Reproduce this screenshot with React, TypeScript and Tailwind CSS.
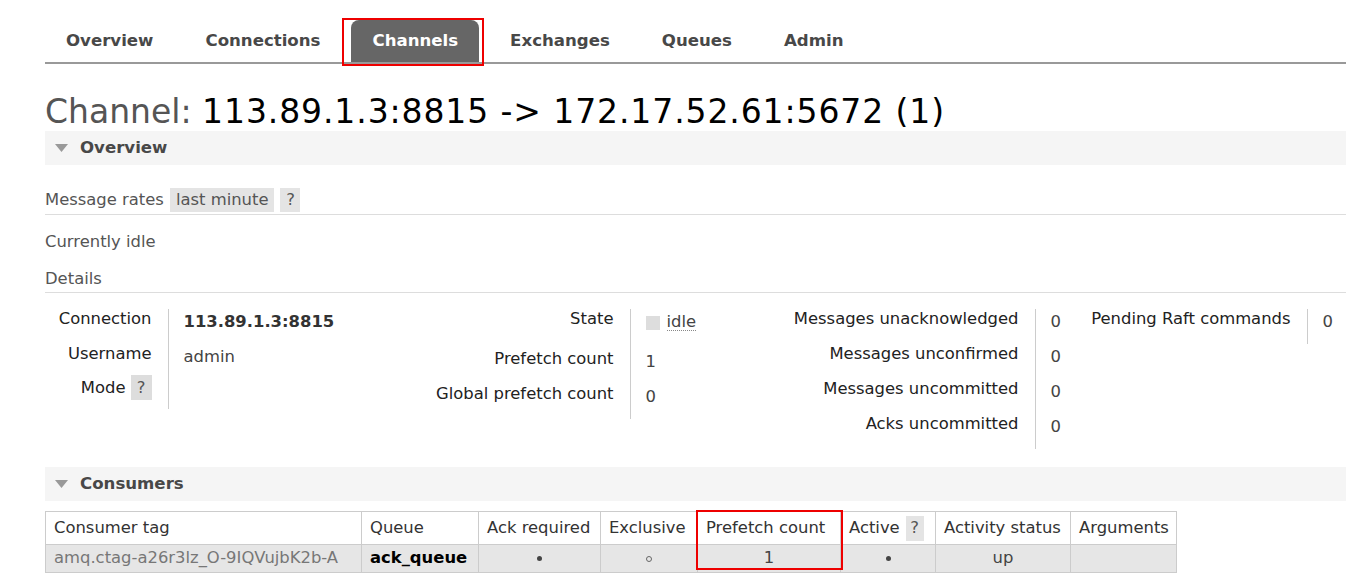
import React from 'react'

const navItems = ['Overview', 'Connections', 'Channels', 'Exchanges', 'Queues', 'Admin']

function Help() {
  return <span className="ml-[5px] inline-flex h-[25px] w-[21px] items-center justify-center bg-[#dddddd] text-[#555]">?</span>
}

function SectionBar({ title }: { title: string }) {
  return (
    <div className="flex h-[34px] items-center bg-[#f5f5f5]">
      <svg className="ml-[10px] h-[8px] w-[13px]" viewBox="0 0 13 8">
        <polygon points="0,0 13,0 6.5,8" fill="#999" />
      </svg>
      <span className="ml-[12px] text-[16.6px] font-bold text-[#484848]">{title}</span>
    </div>
  )
}

type Row = { label: React.ReactNode; value: React.ReactNode; h?: string }

function Facts({ rows, thW, tdW }: { rows: Row[]; thW: string; tdW: string }) {
  return (
    <table className="border-collapse self-start">
      <tbody>
        {rows.map((r, i) => (
          <tr key={i}>
            <th className={`${thW} ${r.h ?? 'h-[35px]'} pr-[16px] pt-[2px] text-right align-top font-normal leading-[16px] text-[#222]`}>
              {r.label}
            </th>
            <td className={`${tdW} border-l border-[#cccccc] pl-[15px] pt-[5px] align-top leading-[16px] text-[#444]`}>
              {r.value}
            </td>
          </tr>
        ))}
      </tbody>
    </table>
  )
}

export default function App() {
  const cols = [
    { name: 'Consumer tag', w: 'w-[316px]' },
    { name: 'Queue', w: 'w-[117px]' },
    { name: 'Ack required', w: 'w-[122px]' },
    { name: 'Exclusive', w: 'w-[97px]' },
    { name: 'Prefetch count', w: 'w-[143px]' },
    { name: 'Active', w: 'w-[95px]' },
    { name: 'Activity status', w: 'w-[135px]' },
    { name: 'Arguments', w: 'w-[106px]' },
  ]

  const dot = <span className="inline-block h-[5px] w-[5px] rounded-full bg-[#444] align-middle" />
  const ring = <span className="inline-block h-[6px] w-[6px] rounded-full border border-[#666] align-middle" />

  return (
    <div className="min-h-[579px] bg-white pl-[45px] font-['DejaVu_Sans','Verdana',sans-serif] text-[16.4px] text-[#555]">
      {/* top navigation */}
      <ul className="flex gap-[10px] border-b-2 border-[#999] pt-[20px] text-[16.6px]">
        {navItems.map((n) =>
          n === 'Channels' ? (
            <li key={n} className="relative flex h-[42px] items-center rounded-t-[8px] bg-[#666] px-[21px] font-bold text-white">
              {n}
              <span className="pointer-events-none absolute -bottom-[4px] -left-[9px] -right-[5px] -top-[2px] border-2 border-[#ee0000]" />
            </li>
          ) : (
            <li key={n} className="flex h-[42px] items-center px-[21px] font-bold text-[#484848]">
              {n}
            </li>
          ),
        )}
      </ul>

      <h1 className="mt-[29px] text-[33px] font-normal leading-[38px] text-[#555]">
        Channel: <span className="tracking-[0.9px] text-black">113.89.1.3:8815 -&gt; 172.17.52.61:5672 (1)</span>
      </h1>

      <SectionBar title="Overview" />

      <div className="mt-[23px] flex items-center border-b border-[#dddddd] pb-[2px]">
        <span className="leading-[24px]">Message rates</span>
        <span className="ml-[6px] h-[24px] bg-[#e4e4e4] px-[6px] leading-[24px]">last minute</span>
        <span className="ml-[6px] h-[24px] w-[20px] bg-[#e4e4e4] text-center leading-[24px]">?</span>
      </div>

      <div className="mt-[15px] leading-[24px]">Currently idle</div>
      <div className="mt-[13px] border-b border-[#dddddd] pb-[1px] leading-[24px]">Details</div>

      <div className="mt-[16px] flex">
        <Facts
          thW="w-[123px]"
          tdW="w-[210px]"
          rows={[
            { label: 'Connection', value: <span className="font-bold text-[#333]">113.89.1.3:8815</span> },
            { label: 'Username', value: 'admin' },
            {
              label: (
                <span className="relative -top-[6px] inline-flex items-center">
                  Mode
                  <Help />
                </span>
              ),
              value: '',
              h: 'h-[30px]',
            },
          ]}
        />
        <Facts
          thW="w-[252px]"
          tdW="w-[130px]"
          rows={[
            {
              label: 'State',
              h: 'h-[40px]',
              value: (
                <span className="inline-flex items-center">
                  <span className="h-[14px] w-[14px] bg-[#dddddd]" />
                  <span className="ml-[7px] border-b border-dotted border-[#888]">idle</span>
                </span>
              ),
            },
            { label: 'Prefetch count', value: '1' },
            { label: 'Global prefetch count', value: '0' },
          ]}
        />
        <Facts
          thW="w-[275px]"
          tdW="w-[40px]"
          rows={[
            { label: 'Messages unacknowledged', value: '0' },
            { label: 'Messages unconfirmed', value: '0' },
            { label: 'Messages uncommitted', value: '0' },
            { label: 'Acks uncommitted', value: '0' },
          ]}
        />
        <Facts thW="w-[232px]" tdW="w-[39px]" rows={[{ label: 'Pending Raft commands', value: '0' }]} />
      </div>

      <div className="mt-[18px]">
        <SectionBar title="Consumers" />
      </div>

      <div className="relative mt-[10px] w-[1131px]">
        <table className="w-[1131px] table-fixed border-collapse">
          <thead>
            <tr>
              {cols.map((c) => (
                <th key={c.name} className={`${c.w} h-[33px] border border-[#cccccc] bg-white px-[8px] text-left font-normal whitespace-nowrap text-[#333]`}>
                  {c.name === 'Active' ? (
                    <span className="inline-flex items-center">
                      Active
                      <span className="ml-[6px] inline-flex h-[25px] w-[18px] items-center justify-center bg-[#e4e4e4] text-[#555]">?</span>
                    </span>
                  ) : (
                    c.name
                  )}
                </th>
              ))}
            </tr>
          </thead>
          <tbody>
            <tr className="bg-[#e6e6e6]">
              <td className="h-[28px] border border-[#cccccc] px-[8px] whitespace-nowrap text-[#777]">amq.ctag-a26r3lz_O-9IQVujbK2b-A</td>
              <td className="border border-[#cccccc] px-[8px] font-bold text-black">ack_queue</td>
              <td className="border border-[#cccccc] text-center">{dot}</td>
              <td className="border border-[#cccccc] text-center">{ring}</td>
              <td className="border border-[#cccccc] text-center text-[#444]">1</td>
              <td className="border border-[#cccccc] text-center">{dot}</td>
              <td className="border border-[#cccccc] text-center text-[#444]">up</td>
              <td className="border border-[#cccccc]"></td>
            </tr>
          </tbody>
        </table>
        <span className="pointer-events-none absolute left-[651px] top-[-1px] h-[60px] w-[147px] border-2 border-[#ee0000]" />
      </div>
    </div>
  )
}
